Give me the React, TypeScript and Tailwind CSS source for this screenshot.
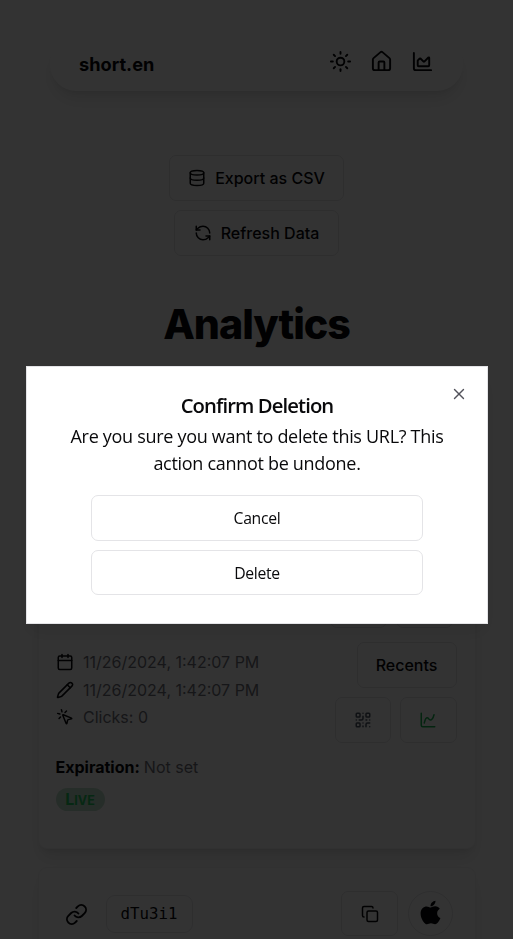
import {
  Sun, House, ChartArea, Database, RefreshCcw, Calendar, Pencil, MousePointerClick,
  QrCode, ChartSpline, Link, Copy, X,
} from "lucide-react";
import type { ReactNode } from "react";

const outline =
  "flex items-center justify-center rounded-[7px] border border-[#e4e4e7] bg-white";

function Meta({ icon, children }: { icon: ReactNode; children: ReactNode }) {
  return (
    <li className="flex h-[27.5px] items-center gap-[9.5px]">
      {icon}
      <span className="whitespace-nowrap text-[16px] text-[#71717a]">{children}</span>
    </li>
  );
}

function Nav() {
  return (
    <nav className="mx-auto mt-[38px] flex h-[53px] w-[413px] items-center justify-between rounded-full bg-white pl-[29px] pr-[29px] shadow-[0_11px_17px_-3px_rgba(0,0,0,0.1),0_4px_7px_-4px_rgba(0,0,0,0.1)]">
      <span className="text-[18.2px] font-bold leading-none">short.en</span>
      <div className="-mt-[6px] flex items-center gap-[18px]">
        <Sun className="size-[23px]" />
        <House className="size-[23px]" />
        <ChartArea className="size-[23px]" />
      </div>
    </nav>
  );
}

function AppleLogo() {
  return (
    <svg viewBox="0 0 384 512" className="-mt-[2px] h-[27px] w-[21px]" fill="#09090b">
      <path d="M318.7 268.7c-.2-36.7 16.4-64.4 50-84.8-18.8-26.9-47.2-41.7-84.7-44.6-35.5-2.8-74.3 20.7-88.5 20.7-15 0-49.4-19.7-76.4-19.7C63.3 141.2 4 184.8 4 273.5q0 39.3 14.4 81.2c12.8 36.7 59 126.7 107.2 125.2 25.2-.6 43-17.9 75.8-17.9 31.8 0 48.3 17.9 76.4 17.9 48.6-.7 90.4-82.5 102.6-119.3-65.2-30.7-61.7-90-61.7-91.9zm-56.6-164.2c27.3-32.4 24.8-61.9 24-72.5-24.1 1.4-52 16.4-67.9 34.9-17.5 19.8-27.8 44.3-25.6 71.9 26.1 2 49.9-11.4 69.5-34.3z" />
    </svg>
  );
}

const cardClass =
  "mx-auto w-[438px] rounded-[9px] border border-[#f4f4f5] bg-white shadow-[0_11px_17px_-3px_rgba(0,0,0,0.1),0_4px_7px_-4px_rgba(0,0,0,0.1)]";

function UrlCard() {
  return (
    <article className={cardClass + " mt-[24px] flex h-[478px] flex-col justify-end pb-[37px] pl-[17px] pr-[18px]"}>
      <div className="mb-[14px] flex justify-end gap-[9px] pr-[4px]">
        <div className={outline + " h-[46px] w-[57px]"} />
        <div className={outline + " h-[46px] w-[57px]"} />
      </div>
      <div className="flex justify-between">
        <ul className="mt-[6.5px]">
          <Meta icon={<Calendar className="size-[18px]" />}>11/26/2024, 1:42:07 PM</Meta>
          <Meta icon={<Pencil className="size-[18px]" />}>11/26/2024, 1:42:07 PM</Meta>
          <Meta icon={<MousePointerClick className="size-[18px]" />}>Clicks: 0</Meta>
        </ul>
        <div className="flex flex-col items-end gap-[9px]">
          <button className={outline + " h-[46px] w-[100px] text-[16px] font-medium"}>Recents</button>
          <div className="flex gap-[9px]">
            <button className={outline + " h-[46px] w-[56px]"}><QrCode className="size-[18px] text-[#4b5563]" /></button>
            <button className={outline + " h-[46px] w-[57px]"}><ChartSpline className="size-[18px] text-[#16b351]" /></button>
          </div>
        </div>
      </div>
      <p className="mt-[12px] flex h-[24px] items-center gap-[4px] text-[16px]">
        <b className="font-bold">Expiration:</b>
        <span className="text-[#71717a]">Not set</span>
      </p>
      <span className="mt-[9px] flex h-[23px] w-[49px] shrink-0 items-baseline justify-center rounded-full bg-[#bfe0cb] pt-[3px] text-[16px] font-bold leading-[17px] text-[#22c55e]">
        L<span className="text-[12.5px]">IVE</span>
      </span>
    </article>
  );
}

function NextCard() {
  return (
    <article className={cardClass + " mt-[18px] flex h-[400px] items-start justify-between pl-[26px] pr-[22px] pt-[23px]"}>
      <div className="flex h-[46px] items-center gap-[18px]">
        <Link className="size-[23px]" />
        <code className="flex h-[38px] w-[87px] items-center justify-center rounded-[9px] border border-[#e4e4e7] text-[15.75px] [font-family:'DejaVu_Sans_Mono',monospace]">
          dTu3i1
        </code>
      </div>
      <div className="flex gap-[9.5px]">
        <button className={outline + " h-[45px] w-[57px]"}><Copy className="size-[18px]" /></button>
        <div className="flex size-[45px] items-center justify-center rounded-full border border-[#e4e4e7]"><AppleLogo /></div>
      </div>
    </article>
  );
}

function ConfirmDialog() {
  return (
    <div className="fixed inset-0 bg-black/80">
      <section
        role="dialog"
        className="absolute left-[26px] top-[366px] flex h-[258px] w-[462px] flex-col items-center border border-[#e4e4e7] bg-white pt-[26px] text-[#09090b] shadow-[0_11px_17px_-3px_rgba(0,0,0,0.1)] [font-family:'Open_Sans','Noto_Sans',sans-serif]"
      >
        <h2 className="h-[25px] whitespace-nowrap text-[20.25px] font-semibold leading-[25px] tracking-[-0.9px]">Confirm Deletion</h2>
        <p className="mt-[5px] whitespace-nowrap text-center text-[18px] leading-[27px] tracking-[-0.3px]">
          Are you sure you want to delete this URL? This
          <br />
          action cannot be undone.
        </p>
        <div className="mt-[18px] flex flex-col gap-[9px] text-[15.75px] tracking-[-0.3px]">
          <button className={outline + " h-[46px] w-[332px] pt-[2px]"}>Cancel</button>
          <button className={outline + " h-[45px] w-[332px] pt-[2px]"}>Delete</button>
        </div>
        <button className="absolute right-[19px] top-[18px] text-[#52525b]" aria-label="Close">
          <X className="size-[18px]" strokeWidth={1.8} />
        </button>
      </section>
    </div>
  );
}

export default function App() {
  return (
    <div className="flow-root h-[939px] w-[513px] overflow-hidden bg-white text-[#09090b] [font-family:Inter,sans-serif]">
      <Nav />
      <div className="mt-[64px] flex flex-col items-center gap-[9px] text-[16px] font-medium">
        <button className={outline + " h-[46px] w-[175px] gap-[9px]"}>
          <Database className="size-[18px]" />
          Export as CSV
        </button>
        <button className={outline + " h-[46px] w-[165px] gap-[9px] pb-[1px]"}>
          <RefreshCcw className="size-[18px]" />
          Refresh Data
        </button>
      </div>
      <h1 className="mt-[46px] h-[45px] text-center text-[41.2px] font-extrabold leading-[45px] tracking-[-0.025em]">Analytics</h1>
      <UrlCard />
      <NextCard />
      <ConfirmDialog />
    </div>
  );
}
